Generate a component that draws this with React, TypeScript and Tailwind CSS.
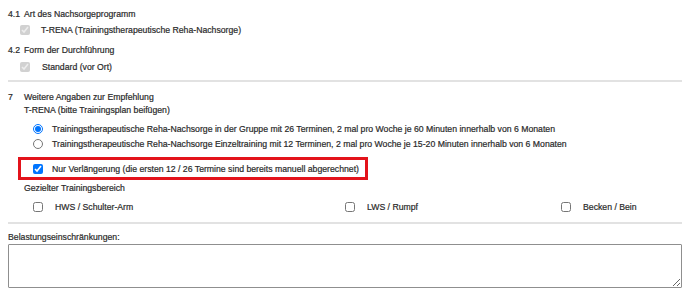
import React from 'react';

const Check = ({ checked = false, disabled = false }: { checked?: boolean; disabled?: boolean }) => (
  <input
    type="checkbox"
    defaultChecked={checked}
    disabled={disabled}
    className="m-0 h-[10px] w-[10px] shrink-0 accent-[#0075ff]"
  />
);

const Radio = ({ checked = false }: { checked?: boolean }) => (
  <input
    type="radio"
    name="trena"
    defaultChecked={checked}
    className="m-0 h-[10px] w-[10px] shrink-0 accent-[#0075ff]"
  />
);

const areas = [
  { label: 'HWS / Schulter-Arm', width: 'w-[312px]' },
  { label: 'LWS / Rumpf', width: 'w-[216px]' },
  { label: 'Becken / Bein', width: 'w-[100px]' },
];

export default function App() {
  return (
    <div className="h-[292px] w-[688px] overflow-hidden bg-white pl-2 pr-[6px] pt-2 font-['Liberation_Sans',Arial,sans-serif] text-[8.7px] leading-[12px] text-[#2a2a2a] [-webkit-text-stroke:0.2px_#2a2a2a]">
      {/* 4.1 */}
      <div className="flex h-3 items-center">
        <span className="w-4">4.1</span>
        <span>Art des Nachsorgeprogramm</span>
      </div>
      <div className="mt-1 flex h-3 items-center pl-3">
        <Check checked disabled />
        <span className="ml-[11px]">T-RENA (Trainingstherapeutische Reha-Nachsorge)</span>
      </div>

      {/* 4.2 */}
      <div className="mt-2 flex h-3 items-center">
        <span className="w-4">4.2</span>
        <span>Form der Durchführung</span>
      </div>
      <div className="mt-[5px] flex h-3 items-center pl-3">
        <Check checked disabled />
        <span className="ml-3">Standard (vor Ort)</span>
      </div>

      <div className="mt-[7px] h-[2px] bg-[#e2e2e2]" />

      {/* 7 */}
      <div className="mt-[9px] flex h-3 items-center">
        <span className="w-4">7</span>
        <span>Weitere Angaben zur Empfehlung</span>
      </div>
      <div className="mt-[1px] flex h-3 items-center pl-4">T-RENA (bitte Trainingsplan beifügen)</div>

      <div className="mt-[7px] flex h-3 items-center pl-[25px]">
        <Radio checked />
        <span className="ml-[9px]">
          Trainingstherapeutische Reha-Nachsorge in der Gruppe mit 26 Terminen, 2 mal pro Woche je 60 Minuten innerhalb von 6 Monaten
        </span>
      </div>
      <div className="mt-[3px] flex h-3 items-center pl-[25px]">
        <Radio />
        <span className="ml-[9px]">
          Trainingstherapeutische Reha-Nachsorge Einzeltraining mit 12 Terminen, 2 mal pro Woche je 15-20 Minuten innerhalb von 6 Monaten
        </span>
      </div>

      <div className="ml-[10px] mt-[7px] flex h-[23px] w-[350px] items-center border-[3px] border-[#e3131b] pl-[12px]">
        <Check checked />
        <span className="ml-[9px] whitespace-nowrap">
          Nur Verlängerung (die ersten 12 / 26 Termine sind bereits manuell abgerechnet)
        </span>
      </div>

      <div className="mt-[2px] flex h-3 items-center pl-4">Gezielter Trainingsbereich</div>
      <div className="mt-[7px] flex h-3 items-center pl-[25px]">
        {areas.map((a) => (
          <div key={a.label} className={`flex items-center ${a.width}`}>
            <Check />
            <span className="ml-[12px]">{a.label}</span>
          </div>
        ))}
      </div>

      <div className="mt-[9px] h-[2px] bg-[#e2e2e2]" />

      <div className="mt-[7px] flex h-3 items-center">Belastungseinschränkungen:</div>
      <textarea className="mt-[1px] block h-[44px] w-full rounded-[1px] border border-[#8f8f8f] bg-white p-1 text-[10px] outline-none" />
    </div>
  );
}
